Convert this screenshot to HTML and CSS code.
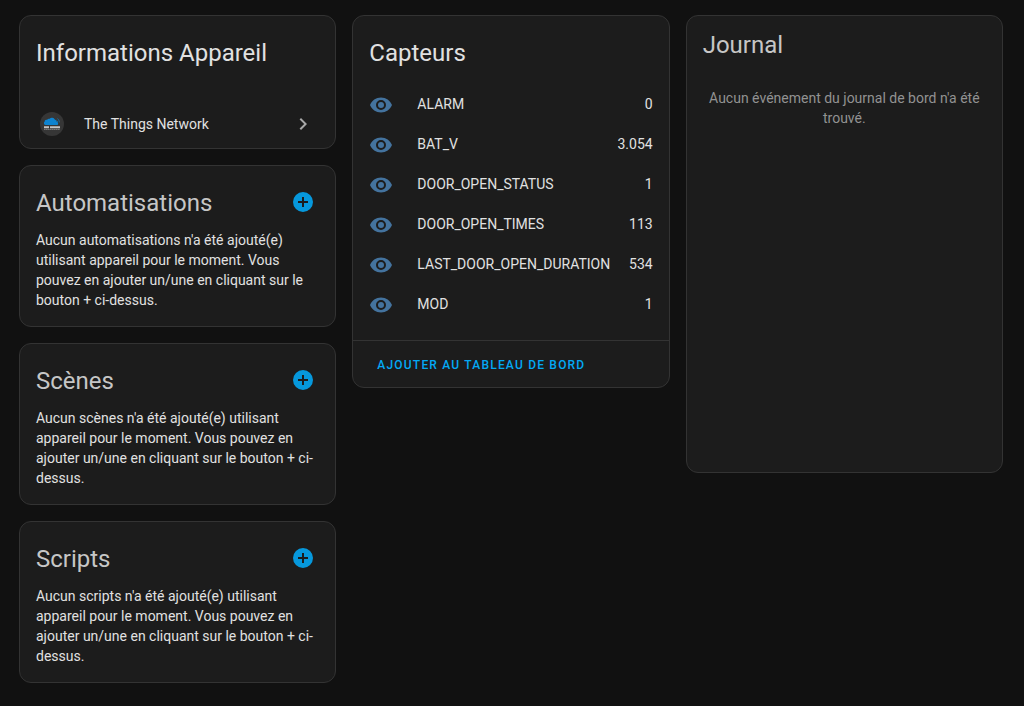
FILE: index.html
```html
<!DOCTYPE html>
<html lang="fr">
<head>
<meta charset="utf-8">
<meta name="viewport" content="width=device-width, initial-scale=1">
<title>Appareil</title>
<link rel="stylesheet" href="styles.css">
</head>
<body>
<svg class="defs" aria-hidden="true">
  <symbol id="eye" viewBox="0 0 24 24"><path d="M12,9A3,3 0 0,0 9,12A3,3 0 0,0 12,15A3,3 0 0,0 15,12A3,3 0 0,0 12,9M12,17A5,5 0 0,1 7,12A5,5 0 0,1 12,7A5,5 0 0,1 17,12A5,5 0 0,1 12,17M12,4.5C7,4.5 2.73,7.61 1,12C2.73,16.39 7,19.5 12,19.5C17,19.5 21.27,16.39 23,12C21.27,7.61 17,4.5 12,4.5Z"/></symbol>
  <symbol id="plus" viewBox="0 0 24 24"><path d="M17,13H13V17H11V13H7V11H11V7H13V11H17M12,2A10,10 0 0,0 2,12A10,10 0 0,0 12,22A10,10 0 0,0 22,12A10,10 0 0,0 12,2Z"/></symbol>
  <symbol id="chevron" viewBox="0 0 24 24"><path d="M8.59,16.58L13.17,12L8.59,7.41L10,6L16,12L10,18L8.59,16.58Z"/></symbol>
</svg>
<main class="columns">
  <div class="column">
    <section class="card">
      <header class="card-header"><h1 class="title">Informations Appareil</h1></header>
      <a class="integration" href="#">
        <svg class="logo" viewBox="0 0 24 24" aria-hidden="true">
          <circle class="logo-disc" cx="12" cy="12" r="12"/>
          <path class="logo-cloud" d="M5.6 13A1.8 1.8 0 0 1 4.6 9.8A2 2 0 0 1 7.2 7.8A2 2 0 0 1 9.6 6.8A3.2 3.2 0 0 1 14.8 7.6A2.4 2.4 0 0 1 16.6 9.6A2 2 0 0 1 17.6 13Z"/>
          <path class="logo-wave" d="M16.4 8.2Q17.6 8.8 17.8 10.4M17.4 6.6Q19.4 7.6 19.4 10.4"/>
          <path class="logo-name" d="M4 15.2H20"/>
          <path class="logo-sub" d="M4.4 17.5H20"/>
        </svg>
        <span class="integration-name">The Things Network</span>
        <svg class="icon chevron" aria-hidden="true"><use href="#chevron"/></svg>
      </a>
    </section>
    <section class="card">
      <header class="card-header">
        <h1 class="title muted">Automatisations</h1>
        <button class="add" type="button" aria-label="Ajouter une automatisation"><svg class="icon" aria-hidden="true"><use href="#plus"/></svg></button>
      </header>
      <p class="text">Aucun automatisations n'a été ajouté(e) utilisant appareil pour le moment. Vous pouvez en ajouter un/une en cliquant sur le bouton + ci-dessus.</p>
    </section>
    <section class="card">
      <header class="card-header">
        <h1 class="title muted">Scènes</h1>
        <button class="add" type="button" aria-label="Ajouter une scène"><svg class="icon" aria-hidden="true"><use href="#plus"/></svg></button>
      </header>
      <p class="text">Aucun scènes n'a été ajouté(e) utilisant appareil pour le moment. Vous pouvez en ajouter un/une en cliquant sur le bouton + ci-dessus.</p>
    </section>
    <section class="card">
      <header class="card-header">
        <h1 class="title muted">Scripts</h1>
        <button class="add" type="button" aria-label="Ajouter un script"><svg class="icon" aria-hidden="true"><use href="#plus"/></svg></button>
      </header>
      <p class="text">Aucun scripts n'a été ajouté(e) utilisant appareil pour le moment. Vous pouvez en ajouter un/une en cliquant sur le bouton + ci-dessus.</p>
    </section>
  </div>
  <div class="column">
    <section class="card">
      <header class="card-header"><h1 class="title">Capteurs</h1></header>
      <ul class="sensors">
        <li class="sensor"><svg class="icon eye" aria-hidden="true"><use href="#eye"/></svg><span class="sensor-name">ALARM</span><span>0</span></li>
        <li class="sensor"><svg class="icon eye" aria-hidden="true"><use href="#eye"/></svg><span class="sensor-name">BAT_V</span><span>3.054</span></li>
        <li class="sensor"><svg class="icon eye" aria-hidden="true"><use href="#eye"/></svg><span class="sensor-name">DOOR_OPEN_STATUS</span><span>1</span></li>
        <li class="sensor"><svg class="icon eye" aria-hidden="true"><use href="#eye"/></svg><span class="sensor-name">DOOR_OPEN_TIMES</span><span>113</span></li>
        <li class="sensor"><svg class="icon eye" aria-hidden="true"><use href="#eye"/></svg><span class="sensor-name">LAST_DOOR_OPEN_DURATION</span><span>534</span></li>
        <li class="sensor"><svg class="icon eye" aria-hidden="true"><use href="#eye"/></svg><span class="sensor-name">MOD</span><span>1</span></li>
      </ul>
      <footer class="card-actions"><button class="action" type="button">AJOUTER AU TABLEAU DE BORD</button></footer>
    </section>
  </div>
  <div class="column">
    <section class="card journal">
      <header class="card-header journal-header"><h1 class="title muted">Journal</h1></header>
      <p class="text empty">Aucun événement du journal de bord n'a été trouvé.</p>
    </section>
  </div>
</main>
</body>
</html>
```
FILE: styles.css
```css
* { box-sizing: border-box; }
body {
  margin: 0;
  background: #111111;
  color: #e1e1e1;
  font-family: Roboto, "Noto Sans", sans-serif;
  font-size: 14px;
  line-height: 20px;
}
.defs { display: none; }
.columns {
  display: grid;
  grid-template-columns: repeat(3, minmax(0, 1fr));
  gap: 16px;
  align-items: start;
  padding: 15px 21px 23px 19px;
}
.column { display: flex; flex-direction: column; gap: 16px; }
.card {
  background: #1c1c1c;
  border: 1px solid #333333;
  border-radius: 12px;
}
.card-header {
  display: flex;
  align-items: flex-start;
  justify-content: space-between;
  padding: 12px 20px 2px 16px;
}
.title { margin: 0; font-size: 24px; font-weight: 400; line-height: 50px; }
.muted { color: #c6c6c6; }
.icon { display: block; flex: none; width: 24px; height: 24px; fill: currentColor; }
.add {
  margin: 12px 0 0;
  padding: 0;
  border: 0;
  background: none;
  color: #0698dc;
  cursor: pointer;
}
.text { margin: 0; padding: 0 16px 16px; }
.integration {
  display: flex;
  align-items: center;
  height: 48px;
  margin-top: 20px;
  padding: 0 20px;
  color: inherit;
  text-decoration: none;
}
.logo { flex: none; width: 24px; height: 24px; }
.logo-disc { fill: #363636; }
.logo-cloud { fill: #0d83d0; }
.logo-wave { fill: none; stroke: #176aa0; stroke-width: 1; }
.logo-name { stroke: #c4c4c4; stroke-width: 2; stroke-dasharray: 5 1 10; }
.logo-sub { stroke: #a0a0a0; stroke-width: 1; stroke-dasharray: 1 1; }
.integration-name { flex: 1; margin-left: 20px; }
.chevron { color: #a8a8a8; }
.sensors { margin: 0; padding: 4px 16px 16px; list-style: none; }
.sensor { display: flex; align-items: center; height: 40px; }
.sensor-name { flex: 1; margin-left: 24px; }
.eye { margin-top: 2px; color: #44739e; }
.card-actions { padding: 6px 16px 4px; border-top: 1px solid #333333; }
.action {
  display: block;
  height: 36px;
  padding: 0 8px;
  border: 0;
  background: none;
  color: #03a9f4;
  font: 500 12px/20px Roboto, "Noto Sans", sans-serif;
  letter-spacing: 0.1em;
  cursor: pointer;
}
.journal { min-height: 458px; }
.journal-header { padding-top: 4px; }
.empty { padding-top: 16px; color: #929292; text-align: center; }
```
